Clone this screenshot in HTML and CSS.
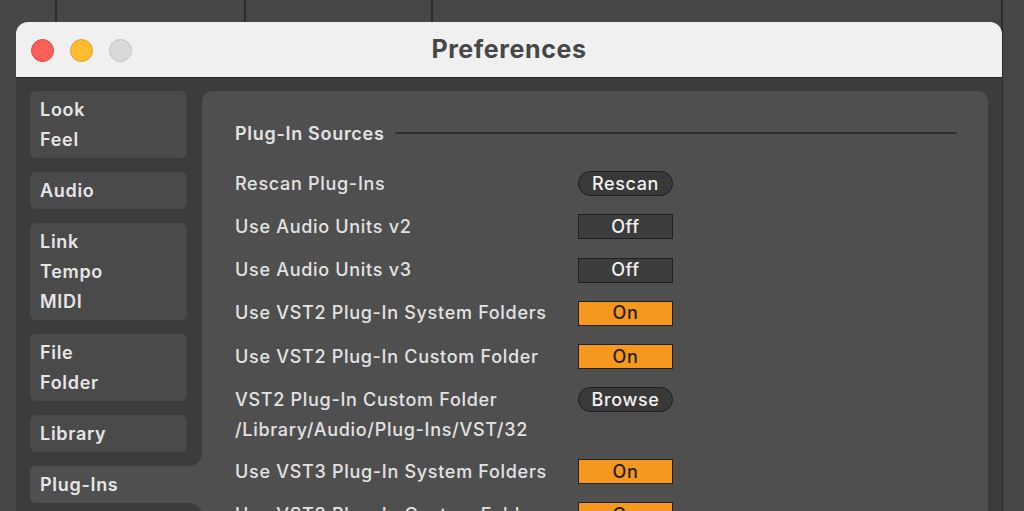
FILE: index.html
```html
<!DOCTYPE html>
<html lang="en">
<head>
    <meta charset="UTF-8">
    <meta name="viewport" content="width=device-width, initial-scale=1.0">
    <title>Preferences</title>
    <link rel="stylesheet" href="styles.css">
</head>
<body>
    <div class="backdrop">
        <div class="cell c1"></div>
        <div class="cell c2"></div>
        <div class="cell c3"></div>
        <div class="cell c4"></div>
    </div>

    <div class="window">
        <div class="titlebar">
            <div class="lights">
                <span class="light red"></span>
                <span class="light yellow"></span>
                <span class="light grey"></span>
            </div>
            <h1>Preferences</h1>
            <div></div>
        </div>

        <div class="content">
            <nav class="sidebar">
                <div class="group"><span>Look</span><span>Feel</span></div>
                <div class="group"><span>Audio</span></div>
                <div class="group"><span>Link</span><span>Tempo</span><span>MIDI</span></div>
                <div class="group"><span>File</span><span>Folder</span></div>
                <div class="group"><span>Library</span></div>
                <div class="group selected"><span>Plug-Ins</span></div>
            </nav>

            <section class="panel">
                <div class="section-head">
                    <h2>Plug-In Sources</h2>
                    <div class="rule"></div>
                </div>

                <div class="rows">
                    <div class="label">Rescan Plug-Ins</div>
                    <div class="ctrl"><button class="pill">Rescan</button></div>

                    <div class="label">Use Audio Units v2</div>
                    <div class="ctrl"><button class="toggle">Off</button></div>

                    <div class="label">Use Audio Units v3</div>
                    <div class="ctrl"><button class="toggle">Off</button></div>

                    <div class="label">Use VST2 Plug-In System Folders</div>
                    <div class="ctrl"><button class="toggle on">On</button></div>

                    <div class="label">Use VST2 Plug-In Custom Folder</div>
                    <div class="ctrl"><button class="toggle on">On</button></div>

                    <div class="label double">VST2 Plug-In Custom Folder<br>/Library/Audio/Plug-Ins/VST/32</div>
                    <div class="ctrl top"><button class="pill">Browse</button></div>

                    <div class="label">Use VST3 Plug-In System Folders</div>
                    <div class="ctrl"><button class="toggle on">On</button></div>

                    <div class="label">Use VST3 Plug-In Custom Folder</div>
                    <div class="ctrl"><button class="toggle on">On</button></div>
                </div>
            </section>
        </div>
    </div>
</body>
</html>
```

FILE: styles.css
```css
html, body {
    margin: 0;
    height: 511px;
    overflow: hidden;
}
body {
    font-family: Inter, "Open Sans", sans-serif;
    background: linear-gradient(to right, transparent 1001px, #2b2b2b 1001px, #2b2b2b 1003px, transparent 1003px), #464646;
}
.backdrop {
    display: flex;
    height: 22px;
}
.cell {
    border-right: 2px solid #2b2b2b;
}
.c1 { width: 55px; }
.c2 { width: 187px; }
.c3 { width: 185px; }
.c4 { flex: 1; border-right: none; }

.window {
    margin-left: 16px;
    width: 986px;
    border-radius: 12px 12px 0 0;
    overflow: hidden;
}
.titlebar {
    height: 55px;
    background: #f0f0f0;
    border-bottom: 1px solid #262626;
    display: grid;
    grid-template-columns: 1fr auto 1fr;
    align-items: center;
}
.lights {
    display: flex;
    gap: 16px;
    padding-left: 15px;
    padding-top: 1px;
}
.light {
    width: 23px;
    height: 23px;
    border-radius: 50%;
    box-sizing: border-box;
}
.red { background: #fe5f57; border: 1px solid #e4483f; }
.yellow { background: #febc2e; border: 1px solid #e0a025; }
.grey { background: #d9d9d9; border: 1px solid #c2c2c2; }
h1 {
    margin: 0 0 1px 0;
    font-size: 25px;
    font-weight: 700;
    color: #474747;
    letter-spacing: 0.6px;
}

.content {
    display: flex;
    background: #3c3c3c;
    padding: 13px 14px 0 14px;
    height: 420px;
}
.sidebar {
    width: 157px;
    display: flex;
    flex-direction: column;
    gap: 14px;
    flex-shrink: 0;
}
.group {
    background: #4a4a4a;
    border-radius: 6px;
    padding: 3px 10px 4px 10px;
    display: flex;
    flex-direction: column;
}
.group span {
    font-size: 18px;
    line-height: 30px;
    font-weight: 600;
    letter-spacing: 0.7px;
    color: #e6e6e6;
    position: relative;
    top: 1px;
}
.group.selected {
    background: #4f4f4f;
    margin-right: -15px;
    border-radius: 6px 0 0 6px;
    position: relative;
}
.group.selected::before,
.group.selected::after {
    content: "";
    position: absolute;
    right: 0;
    width: 12px;
    height: 12px;
}
.group.selected::before {
    top: -12px;
    background: radial-gradient(circle at 0 0, transparent 11.5px, #4f4f4f 12px);
}
.group.selected::after {
    bottom: -12px;
    background: radial-gradient(circle at 0 100%, transparent 11.5px, #4f4f4f 12px);
}

.panel {
    flex: 1;
    margin-left: 15px;
    background: #4f4f4f;
    border-radius: 10px 10px 0 0;
    padding: 28px 31px 0 33px;
}
.section-head {
    display: flex;
    align-items: center;
    gap: 11px;
    height: 28px;
}
h2 {
    margin: 0;
    font-size: 18px;
    font-weight: 600;
    letter-spacing: 0.7px;
    color: #e3e3e3;
}
.rule {
    flex: 1;
    height: 2px;
    background: #2f2f2f;
}
.rows {
    display: grid;
    grid-template-columns: 343px 95px;
    margin-top: 15px;
}
.label {
    font-size: 18px;
    font-weight: 500;
    letter-spacing: 0.7px;
    line-height: 30px;
    padding: 6.6px 0 6.7px 0;
    color: #e3e3e3;
}
.label.double {
    padding-bottom: 5px;
}
.ctrl {
    display: flex;
    align-items: center;
}
.ctrl.top {
    align-items: flex-start;
    padding-top: 9px;
}
button {
    font-family: inherit;
    width: 95px;
    height: 25px;
    padding: 0;
    font-size: 18px;
    font-weight: 500;
    letter-spacing: 0.6px;
    line-height: 22px;
    color: #f2f2f2;
    border: 1px solid #1f1f1f;
    background: #3b3b3b;
}
.pill {
    border-radius: 13px;
    background: #393939;
}
.toggle {
    border-radius: 0;
    background: #3d3d3d;
}
.toggle.on {
    background: #f7981e;
    color: #1e1e1e;
}
```
